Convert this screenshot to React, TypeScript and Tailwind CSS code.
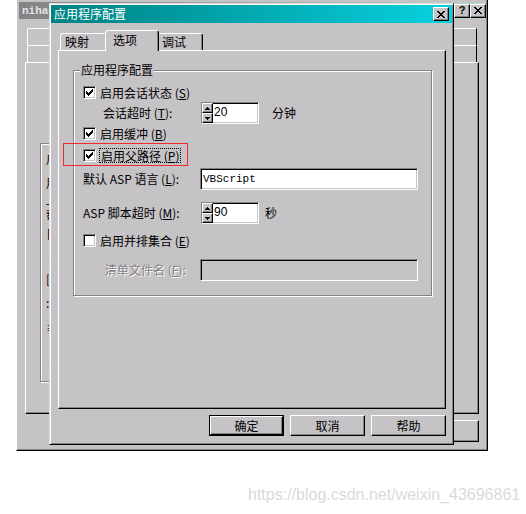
import React from "react";

const raised =
  "border border-t-white border-l-white border-r-black border-b-black shadow-[inset_-1px_-1px_0_#848284]";
const sunken =
  "border border-t-[#848284] border-l-[#848284] border-r-white border-b-white shadow-[inset_1px_1px_0_#000,inset_-1px_-1px_0_#c6c3c6]";
const etched =
  "border border-[#848284] shadow-[inset_1px_1px_0_#fff,1px_1px_0_#fff]";

function Mn({ k }: { k: string }) {
  return (
    <>
      (<span className="underline underline-offset-[1px]">{k}</span>)
    </>
  );
}

function Check({ checked }: { checked?: boolean }) {
  return (
    <span
      className={`flex h-[13px] w-[13px] shrink-0 items-center justify-center bg-white ${sunken}`}
    >
      {checked && (
        <svg width="7" height="7" viewBox="0 0 7 7" shapeRendering="crispEdges">
          <path d="M6 0h1v3h-1v1h-1v1h-1v1h-1v1h-1v-1h-1v-1h-1v-3h1v1h1v1h1v-1h1v-1h1z" fill="#000" />
        </svg>
      )}
    </span>
  );
}

function SpinBtn({ up }: { up?: boolean }) {
  return (
    <span className={`flex h-[10px] w-[11px] items-center justify-center bg-[#c6c3c6] ${raised}`}>
      <svg width="5" height="3" viewBox="0 0 5 3" shapeRendering="crispEdges">
        <path d={up ? "M2 0h1v1h1v1h1v1h-5v-1h1v-1h1z" : "M0 0h5v1h-1v1h-1v1h-1v-1h-1v-1h-1z"} fill="#000" />
      </svg>
    </span>
  );
}

function Spin({ value }: { value: string }) {
  return (
    <div className={`flex h-[22px] w-[58px] shrink-0 bg-white ${sunken}`}>
      <div className="flex flex-col">
        <SpinBtn up />
        <SpinBtn />
      </div>
      <span className="ml-[1px] font-['Liberation_Sans',sans-serif] text-[12px] leading-[18px]">
        {value}
      </span>
    </div>
  );
}

function Button({ label, isDefault }: { label: string; isDefault?: boolean }) {
  return (
    <div className={`flex h-[21px] w-[75px] ${isDefault ? "border border-black" : ""}`}>
      <span className={`flex h-full w-full items-center justify-center bg-[#c6c3c6] ${raised}`}>
        {label}
      </span>
    </div>
  );
}

function CloseBtn({ glyph }: { glyph: "x" | "?" }) {
  return (
    <span className={`flex h-[14px] w-[16px] items-center justify-center bg-[#c6c3c6] ${raised}`}>
      {glyph === "x" ? (
        <svg width="8" height="7" viewBox="0 0 8 7" shapeRendering="crispEdges">
          <path d="M0 0h2v1h1v1h2v-1h1v-1h2v1h-1v1h-1v1h-1v1h1v1h1v1h1v1h-2v-1h-1v-1h-2v1h-1v1h-2v-1h1v-1h1v-1h1v-1h-1v-1h-1v-1h-1z" fill="#000" />
        </svg>
      ) : (
        <span className="font-['Liberation_Sans',sans-serif] text-[11px] font-bold leading-none">?</span>
      )}
    </span>
  );
}

function BackWindow() {
  // only a sliver of this window shows to the left of the dialog
  const frags = [
    { t: "启", m: 6 },
    { t: "用", m: 10 },
    { t: "上", m: 3 },
    { t: "帮", m: 1 },
    { t: "日", m: 5 },
    { t: "丿", m: 4 },
    { t: "[", m: 13 },
    { t: ":", m: 10 },
    { t: "≡", m: 11 },
    { t: "丿", m: 14 },
  ];
  return (
    <div className="absolute left-[16px] top-0 flex h-[451px] w-[472px] flex-col border-b border-l border-r border-b-black border-l-white border-r-black bg-[#c6c3c6] shadow-[inset_-1px_-1px_0_#848284]">
      <div className="ml-[2px] mt-[2px] flex h-[17px] w-[467px] items-center justify-between bg-linear-to-r from-[#848284] to-[#b9d3c8] pl-[3px]">
        <span className="w-[28px] overflow-hidden whitespace-nowrap font-['Liberation_Mono',monospace] text-[11px] font-bold text-[#e4e4e4]">
          nihao
        </span>
        <div className="flex">
          <CloseBtn glyph="?" />
          <CloseBtn glyph="x" />
        </div>
      </div>
      <div className="ml-[10px] mt-[9px] h-[17px] w-[450px] rounded-tl-[2px] border-l border-r border-t border-l-white border-r-black border-t-white" />
      <div className="ml-[10px] h-[17px] w-[450px] rounded-tl-[2px] border-l border-r border-t border-l-white border-r-black border-t-white" />
      <div className={`ml-[8px] h-[352px] w-[454px] ${raised}`}>
        <div className={`ml-[14px] mt-[80px] flex h-[239px] w-[400px] flex-col pl-[5px] pt-[2px] ${etched}`}>
          {frags.map((f, i) => (
            <span
              key={i}
              className="w-[3px] overflow-hidden whitespace-nowrap text-[12px] leading-[14px]"
              style={{ marginTop: f.m }}
            >
              {f.t}
            </span>
          ))}
        </div>
      </div>
      <div className="ml-[8px] mt-[6px] flex w-[454px] justify-end">
        <div className={`h-[22px] w-[75px] ${raised}`} />
      </div>
    </div>
  );
}

function FrontWindow() {
  return (
    <div className="absolute left-[49px] top-[3px] flex h-[442px] w-[405px] flex-col border border-b-black border-l-[#dfdfdf] border-r-black border-t-[#dfdfdf] bg-[#c6c3c6] p-[1px] shadow-[inset_1px_1px_0_#fff,inset_-1px_-1px_0_#848284]">
      <div className="flex h-[18px] shrink-0 items-center justify-between bg-linear-to-r from-[#008284] to-[#08d2e0] pl-[3px] pr-[3px]">
        <span className="text-[12px] leading-[14px] text-white">应用程序配置</span>
        <CloseBtn glyph="x" />
      </div>

      <div className="mt-[7px] flex h-[20px] shrink-0 items-end pl-[9px]">
        <div className="flex h-[17px] w-[47px] items-center rounded-t-[3px] border-l border-r border-t border-l-white border-r-black border-t-white pl-[4px] shadow-[inset_-1px_0_0_#848284]">
          映射
        </div>
        <div className="relative z-10 -mx-[2px] -mb-[1px] flex h-[21px] w-[54px] items-center rounded-t-[3px] border-l border-r border-t border-l-white border-r-black border-t-white bg-[#c6c3c6] pb-[2px] pl-[7px] shadow-[inset_-1px_0_0_#848284]">
          选项
        </div>
        <div className="flex h-[17px] w-[46px] items-center rounded-t-[3px] border-l border-r border-t border-l-white border-r-black border-t-white pl-[4px] shadow-[inset_-1px_0_0_#848284]">
          调试
        </div>
      </div>

      <div className={`ml-[7px] h-[359px] w-[388px] shrink-0 pl-[14px] pt-[19px] ${raised}`}>
        <div className={`relative flex h-[226px] w-[359px] flex-col pt-[13px] ${etched}`}>
          <span className="absolute -top-[8px] left-[6px] bg-[#c6c3c6] px-[1px]">应用程序配置</span>

          <div className="flex h-[17px] items-center gap-[4px] pl-[9px]">
            <Check checked />
            <span>
              启用会话状态 <Mn k="S" />
            </span>
          </div>

          <div className="mt-[1px] flex h-[22px] items-center pl-[29px]">
            <span className="w-[98px]">
              会话超时 <Mn k="T" />:
            </span>
            <Spin value="20" />
            <span className="ml-[13px]">分钟</span>
          </div>

          <div className="mt-[1px] flex h-[17px] items-center gap-[4px] pl-[9px]">
            <Check checked />
            <span>
              启用缓冲 <Mn k="B" />
            </span>
          </div>

          <div className="mt-[5px] flex h-[17px] items-center gap-[3px] pl-[9px]">
            <Check checked />
            <span className="border border-dotted border-black px-[1px] leading-[13px]">
              启用父路径 <Mn k="P" />
            </span>
          </div>

          <div className="mt-[4px] flex h-[22px] items-center pl-[9px]">
            <span className="w-[117px]">
              默认 ASP 语言 <Mn k="L" />:
            </span>
            <div className={`flex h-[22px] w-[218px] items-center bg-white pl-[2px] ${sunken}`}>
              <span className="font-['Liberation_Mono',monospace] text-[11px]">VBScript</span>
            </div>
          </div>

          <div className="mt-[12px] flex h-[22px] items-center pl-[9px]">
            <span className="w-[118px]">
              ASP 脚本超时 <Mn k="M" />:
            </span>
            <Spin value="90" />
            <span className="ml-[6px]">秒</span>
          </div>

          <div className="mt-[8px] flex h-[17px] items-center gap-[4px] pl-[9px]">
            <Check />
            <span>
              启用并排集合 <Mn k="E" />
            </span>
          </div>

          <div className="mt-[10px] flex h-[22px] items-center pl-[31px]">
            <span className="w-[95px] text-[#848284] [text-shadow:1px_1px_0_#fff]">
              清单文件名 <Mn k="F" />:
            </span>
            <div className={`h-[22px] w-[218px] bg-[#c6c3c6] ${sunken}`} />
          </div>
        </div>
      </div>

      <div className="ml-[7px] mt-[6px] flex w-[388px] justify-end gap-[6px]">
        <Button label="确定" isDefault />
        <Button label="取消" />
        <Button label="帮助" />
      </div>
    </div>
  );
}

export default function App() {
  return (
    <div className="relative h-[514px] w-[526px] overflow-hidden bg-white font-['Noto_Sans_CJK_SC','Noto_Sans',sans-serif] text-[12px] leading-[14px] text-black">
      <BackWindow />
      <FrontWindow />
      <div className="absolute left-[63px] top-[143px] z-20 h-[23px] w-[125px] border border-[#ee2a2a]" />
      <span className="absolute left-[248px] top-[485px] font-['Liberation_Sans',sans-serif] text-[16px] leading-[20px] text-[#dadada]">
        https://blog.csdn.net/weixin_43696861
      </span>
    </div>
  );
}
